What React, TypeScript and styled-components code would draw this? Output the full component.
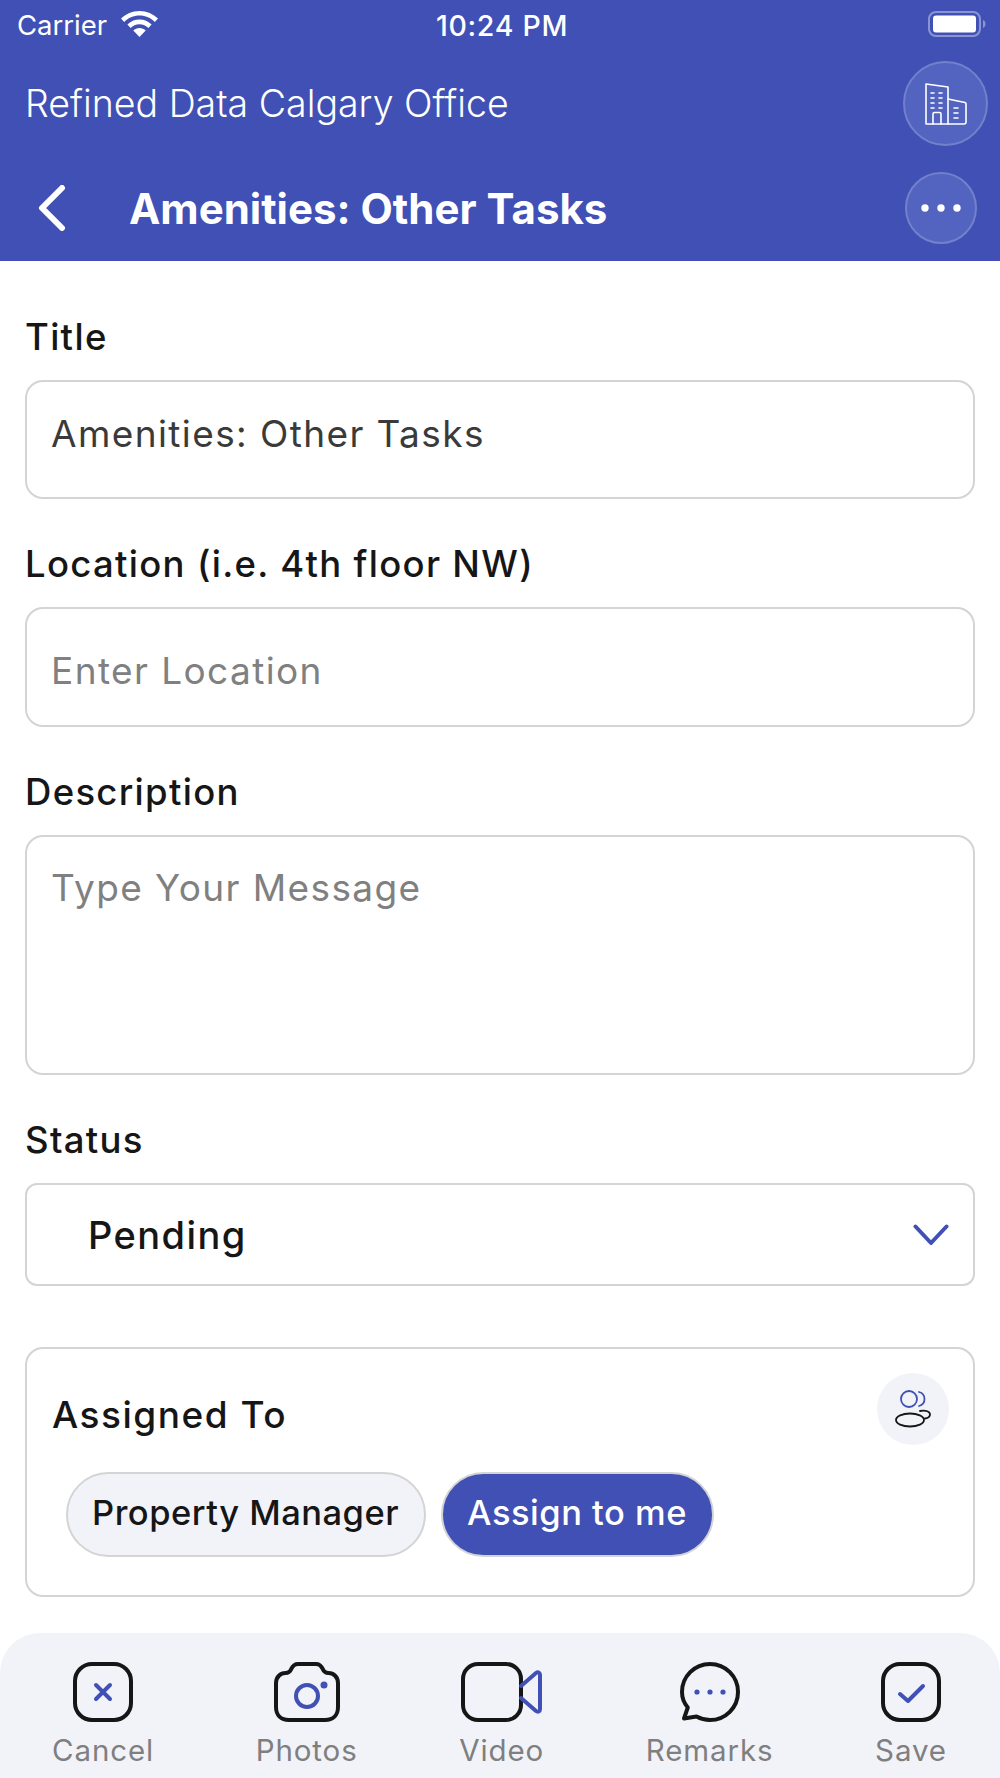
import React, { FunctionComponent } from "react";
import styled, { createGlobalStyle } from "styled-components";

const BRAND = "#4050b5";
const INK = "#161616";
const EDGE = "#d4d4d4";
const TINT = "#f2f3f9";

const GlobalStyle = createGlobalStyle`
  html, body {
    margin: 0;
    padding: 0;
    background: #fff;
    font-family: "Inter", "Liberation Sans", sans-serif;
  }
`

const Page = styled.div`
  width: 1000px;
  height: 1778px;
  display: flex;
  flex-direction: column;
  overflow: hidden;
`

const Header = styled.header`
  height: 261px;
  flex: none;
  display: flex;
  flex-direction: column;
  background: ${BRAND};
  color: #fff;
`

const StatusBar = styled.div`
  height: 52px;
  box-sizing: border-box;
  display: grid;
  grid-template-columns: 1fr auto 1fr;
  align-items: center;
  padding: 0 13px 4px 17px;
  font-size: 27.5px;
`

const Carrier = styled.div`
  display: flex;
  align-items: center;
  gap: 14px;
`

const CarrierName = styled.span`
  padding-top: 2px;
`

const Clock = styled.div`
  padding-top: 2px;
  font-weight: 500;
  font-size: 28.5px;
  letter-spacing: 0.7px;
`

const Battery = styled.svg`
  justify-self: end;
`

const OfficeRow = styled.div`
  height: 103px;
  display: flex;
  align-items: center;
  justify-content: space-between;
  padding: 0 12px 0 25px;
  font-size: 37.5px;
  font-weight: 300;
`

const NavRow = styled.div`
  display: flex;
  align-items: center;
  padding: 0 23px 0 38px;
  height: 106px;
`

const NavTitle = styled.h1`
  flex: 1;
  margin: 0 0 0 63px;
  font-size: 42px;
  font-weight: 700;
`

const RoundButton = styled.div<{ $size: number }>`
  width: ${props => props.$size}px;
  height: ${props => props.$size}px;
  box-sizing: border-box;
  flex: none;
  display: flex;
  align-items: center;
  justify-content: center;
  border-radius: 50%;
  background: #5363c0;
  border: 2px solid #7380cb;
`

const Form = styled.main`
  flex: 1;
  padding: 0 25px;
`

const Field = styled.div`
  margin-top: 44px;
  &:first-child { margin-top: 55px; }
`

const Label = styled.label`
  display: block;
  height: 43px;
  line-height: 43px;
  margin-bottom: 21px;
  font-size: 36.5px;
  font-weight: 500;
  letter-spacing: 1.3px;
  color: ${INK};
`

const TextBox = styled.div<{ $height: number; $muted?: boolean; $pad: string; $top?: boolean }>`
  height: ${props => props.$height}px;
  box-sizing: border-box;
  display: flex;
  align-items: ${props => props.$top ? "flex-start" : "center"};
  padding: ${props => props.$pad};
  border: 2px solid ${EDGE};
  border-radius: 18px;
  font-size: 37px;
  line-height: 42px;
  letter-spacing: 1.4px;
  color: ${props => props.$muted ? "#808080" : "#3a3a3a"};
`

const Select = styled.div`
  height: 103px;
  box-sizing: border-box;
  display: flex;
  align-items: center;
  justify-content: space-between;
  padding: 0 24px 0 61px;
  border: 2px solid ${EDGE};
  border-radius: 12px;
  font-size: 38px;
  font-weight: 500;
  letter-spacing: 1.4px;
  color: ${INK};
`

const Card = styled.section`
  height: 250px;
  box-sizing: border-box;
  margin-top: 61px;
  padding: 24px 24px 0 25px;
  border: 2px solid ${EDGE};
  border-radius: 18px;
`

const CardHead = styled.div`
  display: flex;
  justify-content: space-between;
  align-items: center;
`

const CardTitle = styled.h2`
  margin: 0;
  padding-top: 10px;
  font-size: 37px;
  font-weight: 500;
  letter-spacing: 1.5px;
  color: ${INK};
`

const CircleTint = styled.div`
  width: 72px;
  height: 72px;
  display: flex;
  align-items: center;
  justify-content: center;
  border-radius: 50%;
  background: ${TINT};
`

const Chips = styled.div`
  display: flex;
  gap: 15px;
  margin: 27px 0 0 14px;
`

const Chip = styled.div<{ $active?: boolean }>`
  height: 85px;
  box-sizing: border-box;
  display: flex;
  align-items: center;
  padding: 0 25px 4px 24px;
  border: 2px solid ${EDGE};
  border-radius: 43px;
  font-size: 34.5px;
  font-weight: 500;
  letter-spacing: 0.5px;
  background: ${props => props.$active ? BRAND : TINT};
  color: ${props => props.$active ? "#fff" : INK};
`

const BottomBar = styled.nav`
  height: 145px;
  flex: none;
  box-sizing: border-box;
  display: flex;
  justify-content: space-between;
  padding: 29px 53px 0 52px;
  background: ${TINT};
  border-radius: 40px 40px 0 0;
`

const BarItem = styled.div`
  display: flex;
  flex-direction: column;
  align-items: center;
  gap: 10px;
  font-size: 29.5px;
  letter-spacing: 0.9px;
  color: #7f7f7f;
`

const BarIcon = styled.svg`
  display: block;
  fill: none;
  stroke-linecap: round;
  stroke-linejoin: round;
`

const Wifi = () => (
  <svg width="37" height="26" viewBox="0 0 37 26" fill="#fff">
    <path d="M18.5 0C11.2 0 4.7 2.9 0 7.6l3.2 3.3C7.1 7 12.5 4.6 18.5 4.6s11.4 2.4 15.3 6.3L37 7.6C32.3 2.9 25.8 0 18.5 0z" />
    <path d="M18.5 8.6c-4.7 0-9 1.9-12.1 5l3.2 3.3c2.3-2.2 5.4-3.7 8.9-3.7s6.6 1.5 8.9 3.7l3.2-3.3c-3.1-3.1-7.4-5-12.1-5z" />
    <path d="M18.5 17c-2.4 0-4.6 1-6.2 2.6L18.5 26l6.2-6.4C23.1 18 20.9 17 18.5 17z" />
  </svg>
)

const BatteryIcon = () => (
  <Battery width="59" height="26" viewBox="0 0 59 26">
    <rect x="1" y="1" width="51" height="24" rx="7" fill="none" stroke="#8a94d2" strokeWidth="2" />
    <rect x="5" y="4.500" width="43" height="17" rx="3" fill="#fff" />
    <path d="M55 9c1.800.8 2.500 2.200 2.500 4s-.7 3.200-2.500 4z" fill="#8a94d2" />
  </Battery>
)

const BuildingIcon = () => (
  <svg width="42" height="42" viewBox="0 0 42 42" fill="none" stroke="#fff" strokeWidth="1.600" strokeLinejoin="round" strokeLinecap="round">
    <path d="M1 41V1l22 3v37" />
    <path d="M23 16l17 3.500c.7.200 1 .6 1 1.300V39c0 1.300-.7 2-2 2H2" />
    <path d="M6 10h3M14 10h3M6 15h3M14 15h3M6 20h3M14 20h3M6 25h3M14 25h3" />
    <path d="M8 41V31c0-1 .6-1.500 1.500-1.500h5c1 0 1.500.5 1.500 1.500v10" />
    <path d="M29 25h4M29 30h4M29 35h4" />
  </svg>
)

const DotsIcon = () => (
  <svg width="42" height="10" viewBox="0 0 42 10" fill="#fff">
    <circle cx="5" cy="5" r="3.700" />
    <circle cx="21" cy="5" r="3.700" />
    <circle cx="37" cy="5" r="3.700" />
  </svg>
)

const BackIcon = () => (
  <svg width="28" height="46" viewBox="0 0 28 46" fill="none" stroke="#fff" strokeWidth="6" strokeLinecap="round" strokeLinejoin="round">
    <path d="M24 3L4 23l20 20" />
  </svg>
)

const ChevronIcon = () => (
  <svg width="36" height="22" viewBox="0 0 36 22" fill="none" stroke={BRAND} strokeWidth="4" strokeLinecap="round" strokeLinejoin="round">
    <path d="M2.500 2.500L18 19 33.500 2.500" />
  </svg>
)

const PeopleIcon = () => (
  <svg width="36" height="38" viewBox="0 0 36 38" fill="none" strokeWidth="1.800" strokeLinecap="round">
    <circle cx="14" cy="9" r="8" stroke={BRAND} />
    <path d="M24 2c4 1 5.500 4 5.500 7s-1.500 6-5.500 7" stroke={BRAND} />
    <ellipse cx="15" cy="30" rx="14" ry="6.500" stroke={INK} />
    <path d="M25 21c6-1 10 .5 10 3.500 0 2-2 3.500-5 4" stroke={INK} />
  </svg>
)

const CancelIcon = () => (
  <BarIcon width="60" height="60" viewBox="0 0 60 60">
    <rect x="2" y="2" width="56" height="56" rx="17" stroke={INK} strokeWidth="4" />
    <path d="M23 23l14 14M37 23L23 37" stroke={BRAND} strokeWidth="4" />
  </BarIcon>
)

const PhotosIcon = () => (
  <BarIcon width="66" height="60" viewBox="0 0 66 60">
    <path d="M24 2h18c3 0 5 1.500 6.500 4.500 1.200 3 3 4.500 6 4.500 5 0 9.500 4 9.500 10v24c0 8-5 13-13 13H15C7 58 2 53 2 45V21c0-6 4.500-10 9.500-10 3 0 4.800-1.500 6-4.500C19 3.500 21 2 24 2z" stroke={INK} strokeWidth="4" />
    <circle cx="33" cy="34" r="11" stroke={BRAND} strokeWidth="4" />
    <circle cx="50" cy="23" r="3.500" fill={BRAND} />
  </BarIcon>
)

const VideoIcon = () => (
  <BarIcon width="81" height="60" viewBox="0 0 81 60">
    <rect x="2" y="2" width="58" height="56" rx="15" stroke={INK} strokeWidth="4" />
    <path d="M60 24l15-13c2-1.500 4-.5 4 2v34c0 2.500-2 3.500-4 2L60 36" stroke={BRAND} strokeWidth="4" />
  </BarIcon>
)

const RemarksIcon = () => (
  <BarIcon width="60" height="60" viewBox="0 0 60 60">
    <path d="M30 2c15.500 0 28 12.500 28 28S45.500 58 30 58c-5 0-9.500-1.300-13.500-3.500L4 56.500l3.800-11C4 41 2 36 2 30 2 14.500 14.500 2 30 2z" stroke={INK} strokeWidth="4" />
    <circle cx="17" cy="30" r="2.600" fill={BRAND} />
    <circle cx="30" cy="30" r="2.600" fill={BRAND} />
    <circle cx="43" cy="30" r="2.600" fill={BRAND} />
  </BarIcon>
)

const SaveIcon = () => (
  <BarIcon width="60" height="60" viewBox="0 0 60 60">
    <rect x="2" y="2" width="56" height="56" rx="17" stroke={INK} strokeWidth="4" />
    <path d="M19 32l8 7 15-15" stroke={BRAND} strokeWidth="4" />
  </BarIcon>
)

const App: FunctionComponent = () => {
  return <Page>
    <GlobalStyle />
    <Header>
      <StatusBar>
        <Carrier><CarrierName>Carrier</CarrierName> <Wifi /></Carrier>
        <Clock>10:24 PM</Clock>
        <BatteryIcon />
      </StatusBar>
      <OfficeRow>
        Refined Data Calgary Office
        <RoundButton $size={85}><BuildingIcon /></RoundButton>
      </OfficeRow>
      <NavRow>
        <BackIcon />
        <NavTitle>Amenities: Other Tasks</NavTitle>
        <RoundButton $size={72}><DotsIcon /></RoundButton>
      </NavRow>
    </Header>
    <Form>
      <Field>
        <Label>Title</Label>
        <TextBox $height={119} $pad="0 24px 12px">Amenities: Other Tasks</TextBox>
      </Field>
      <Field>
        <Label>Location (i.e. 4th floor NW)</Label>
        <TextBox $height={120} $muted $pad="8px 24px 0">Enter Location</TextBox>
      </Field>
      <Field>
        <Label>Description</Label>
        <TextBox $height={240} $muted $top $pad="30px 24px">Type Your Message</TextBox>
      </Field>
      <Field>
        <Label>Status</Label>
        <Select>Pending <ChevronIcon /></Select>
      </Field>
      <Card>
        <CardHead>
          <CardTitle>Assigned To</CardTitle>
          <CircleTint><PeopleIcon /></CircleTint>
        </CardHead>
        <Chips>
          <Chip>Property Manager</Chip>
          <Chip $active>Assign to me</Chip>
        </Chips>
      </Card>
    </Form>
    <BottomBar>
      <BarItem><CancelIcon />Cancel</BarItem>
      <BarItem><PhotosIcon />Photos</BarItem>
      <BarItem><VideoIcon />Video</BarItem>
      <BarItem><RemarksIcon />Remarks</BarItem>
      <BarItem><SaveIcon />Save</BarItem>
    </BottomBar>
  </Page>
}

export default App
